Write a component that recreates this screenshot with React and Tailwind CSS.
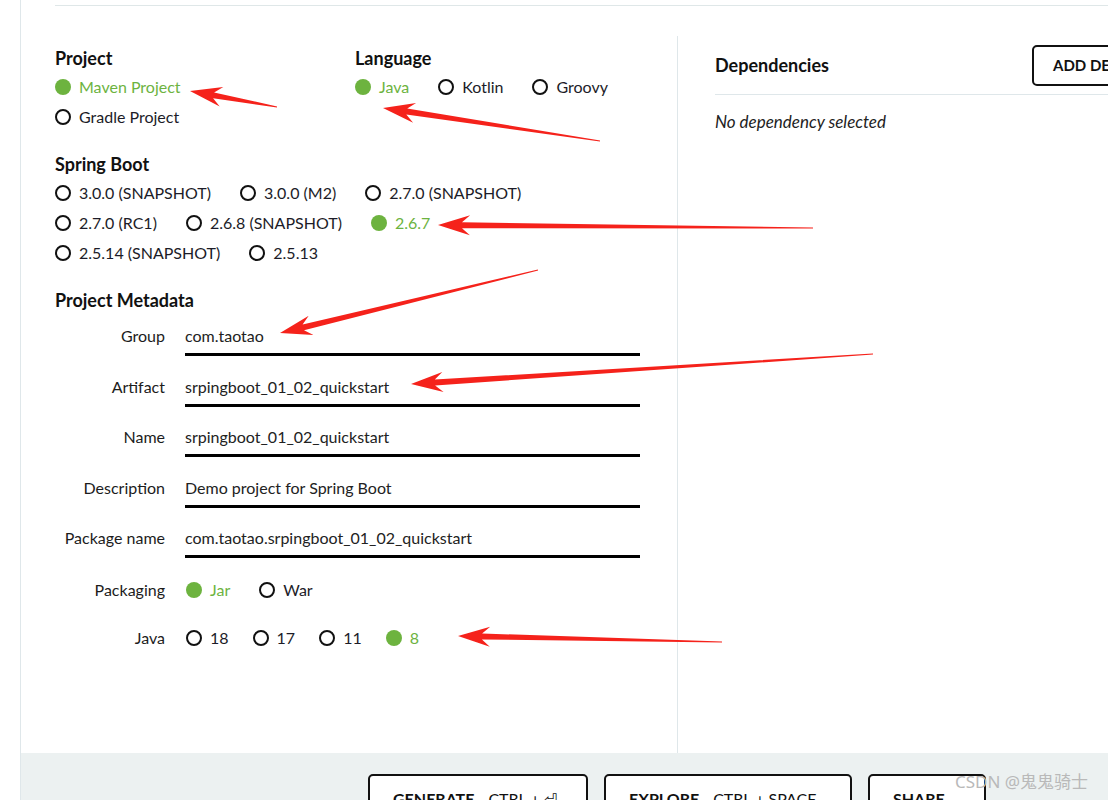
import React from "react";

const GREEN = "#6db33f";

// red annotation arrows drawn over the screenshot (tail -> head)
const arrows = [
  { tail: [277, 107], head: [190, 91] },
  { tail: [600, 141], head: [383, 108] },
  { tail: [813, 228], head: [438, 225] },
  { tail: [538, 270], head: [280, 333] },
  { tail: [873, 354], head: [411, 384] },
  { tail: [722, 642], head: [458, 636] },
];

function arrowPoints({ tail, head }) {
  const dx = head[0] - tail[0];
  const dy = head[1] - tail[1];
  const len = Math.hypot(dx, dy);
  const ux = dx / len;
  const uy = dy / len;
  const nx = -uy;
  const ny = ux;
  const L = 32;
  const neck = [head[0] - ux * L * 0.75, head[1] - uy * L * 0.75];
  const barb = [head[0] - ux * L, head[1] - uy * L];
  const pts = [
    [tail[0] + nx * 0.6, tail[1] + ny * 0.6],
    [neck[0] + nx * 3, neck[1] + ny * 3],
    [barb[0] + nx * 10, barb[1] + ny * 10],
    head,
    [barb[0] - nx * 10, barb[1] - ny * 10],
    [neck[0] - nx * 3, neck[1] - ny * 3],
    [tail[0] - nx * 0.6, tail[1] - ny * 0.6],
  ];
  return pts.map((p) => p[0].toFixed(1) + "," + p[1].toFixed(1)).join(" ");
}

function Radio({ label, checked, last, tight }) {
  const gap = last ? "" : tight ? "mr-[24px]" : "mr-[29px]";
  return (
    <div className={"flex items-center h-[30px] " + gap}>
      {checked ? (
        <span className="w-4 h-4 rounded-full bg-[#6db33f] shrink-0" />
      ) : (
        <span className="w-4 h-4 rounded-full border-2 border-[#111] shrink-0" />
      )}
      <span className={"ml-2 whitespace-nowrap " + (checked ? "text-[#6db33f]" : "text-[#1c1c28]")}>
        {label}
      </span>
    </div>
  );
}

function Field({ label, value, first }) {
  return (
    <div className={"flex " + (first ? "mt-[16px]" : "mt-[20.5px]")}>
      <div className="w-[110px] text-right leading-[20px] text-[#1c1c1c]">{label}</div>
      <div className="ml-[20px] w-[455px] leading-[20px] pb-[7px] border-b-[3px] border-black text-[#222]">
        {value}
      </div>
    </div>
  );
}

export default function App() {
  const springBoot = [
    ["3.0.0 (SNAPSHOT)", "3.0.0 (M2)", "2.7.0 (SNAPSHOT)"],
    ["2.7.0 (RC1)", "2.6.8 (SNAPSHOT)", "2.6.7"],
    ["2.5.14 (SNAPSHOT)", "2.5.13"],
  ];

  return (
    <div className="relative w-[1108px] h-[800px] overflow-hidden bg-white text-[16px] text-[#1c1c28] font-[Lato,'Liberation_Sans',sans-serif]">
      <div className="ml-[20px] h-full border-l border-[#dfe7ea] flex flex-col">
        <div className="flex-1 flex flex-col min-h-0">
          <div className="ml-[34px] mt-[5px] border-t border-[#dfe7e8]" />
          <div className="flex flex-1 mt-[30px] min-h-0">
            {/* left column */}
            <div className="w-[656px] shrink-0 pl-[34px] pt-[12px]">
              <div className="flex">
                <div className="w-[300px]">
                  <h2 className="text-[18px] leading-[20px] font-bold mb-[4px] text-[#111]">Project</h2>
                  <Radio label="Maven Project" checked />
                  <Radio label="Gradle Project" />
                </div>
                <div>
                  <h2 className="text-[18px] leading-[20px] font-bold mb-[4px] text-[#111]">Language</h2>
                  <div className="flex">
                    <Radio label="Java" checked />
                    <Radio label="Kotlin" />
                    <Radio label="Groovy" last />
                  </div>
                </div>
              </div>

              <h2 className="mt-[22px] text-[18px] leading-[20px] font-bold mb-[4px] text-[#111]">Spring Boot</h2>
              {springBoot.map((row, i) => (
                <div key={i} className="flex">
                  {row.map((v) => (
                    <Radio key={v} label={v} checked={v === "2.6.7"} />
                  ))}
                </div>
              ))}

              <h2 className="mt-[22px] text-[18px] leading-[20px] font-bold text-[#111]">Project Metadata</h2>
              <Field label="Group" value="com.taotao" first />
              <Field label="Artifact" value="srpingboot_01_02_quickstart" />
              <Field label="Name" value="srpingboot_01_02_quickstart" />
              <Field label="Description" value="Demo project for Spring Boot" />
              <Field label="Package name" value="com.taotao.srpingboot_01_02_quickstart" />

              <div className="flex items-center mt-[17px]">
                <div className="w-[110px] text-right text-[#1c1c1c]">Packaging</div>
                <div className="ml-[21px] flex">
                  <Radio label="Jar" checked />
                  <Radio label="War" />
                </div>
              </div>
              <div className="flex items-center mt-[18px]">
                <div className="w-[110px] text-right text-[#1c1c1c]">Java</div>
                <div className="ml-[21px] flex">
                  <Radio label="18" tight />
                  <Radio label="17" tight />
                  <Radio label="11" tight />
                  <Radio label="8" checked />
                </div>
              </div>
            </div>

            {/* right column */}
            <div className="flex-1 border-l border-[#dfe7ea] pl-[37px] pt-[9px] overflow-hidden">
              <div className="flex items-center h-[41px] whitespace-nowrap">
                <h2 className="w-[317px] shrink-0 text-[18px] font-bold text-[#111]">Dependencies</h2>
                <div className="shrink-0 h-[41px] border-2 border-[#111] rounded-[5px] px-[19px] flex items-center text-[15px] font-bold text-[#111]">
                  ADD DEPENDENCIES... <span className="ml-3 font-normal">CTRL + B</span>
                </div>
              </div>
              <div className="mt-[8px] border-t border-[#dfe7ea]" />
              <p className="mt-[17px] text-[17px] leading-[20px] italic text-[#222]">No dependency selected</p>
            </div>
          </div>
        </div>

        {/* footer */}
        <div className="h-[47px] shrink-0 bg-[#ecf1f1] flex gap-4 pl-[347px] pt-[21px]">
          <div className="w-[220px] h-[50px] shrink-0 bg-white border-2 border-[#111] rounded-[5px] pl-[23px] pt-[11px] whitespace-nowrap text-[16px] text-[#111]">
            <span className="font-bold">GENERATE</span>
            <span className="ml-[14px]">CTRL + ⏎</span>
          </div>
          <div className="w-[248px] h-[50px] shrink-0 bg-white border-2 border-[#111] rounded-[5px] pl-[23px] pt-[11px] whitespace-nowrap text-[16px] text-[#111]">
            <span className="font-bold">EXPLORE</span>
            <span className="ml-[14px]">CTRL + SPACE</span>
          </div>
          <div className="w-[118px] h-[50px] shrink-0 bg-white border-2 border-[#111] rounded-[5px] pl-[23px] pt-[11px] whitespace-nowrap text-[16px] text-[#111] font-bold">
            SHARE
          </div>
        </div>
      </div>

      <div className="absolute left-[955px] top-[770px] text-[17px] leading-[24px] text-[#b9b9b9] font-['Noto_Sans','Noto_Sans_CJK_SC',sans-serif] whitespace-nowrap">
        CSDN @鬼鬼骑士
      </div>

      <svg className="absolute inset-0 pointer-events-none" width="1108" height="800">
        {arrows.map((a, i) => (
          <polygon key={i} points={arrowPoints(a)} fill="#f5221b" />
        ))}
      </svg>
    </div>
  );
}
